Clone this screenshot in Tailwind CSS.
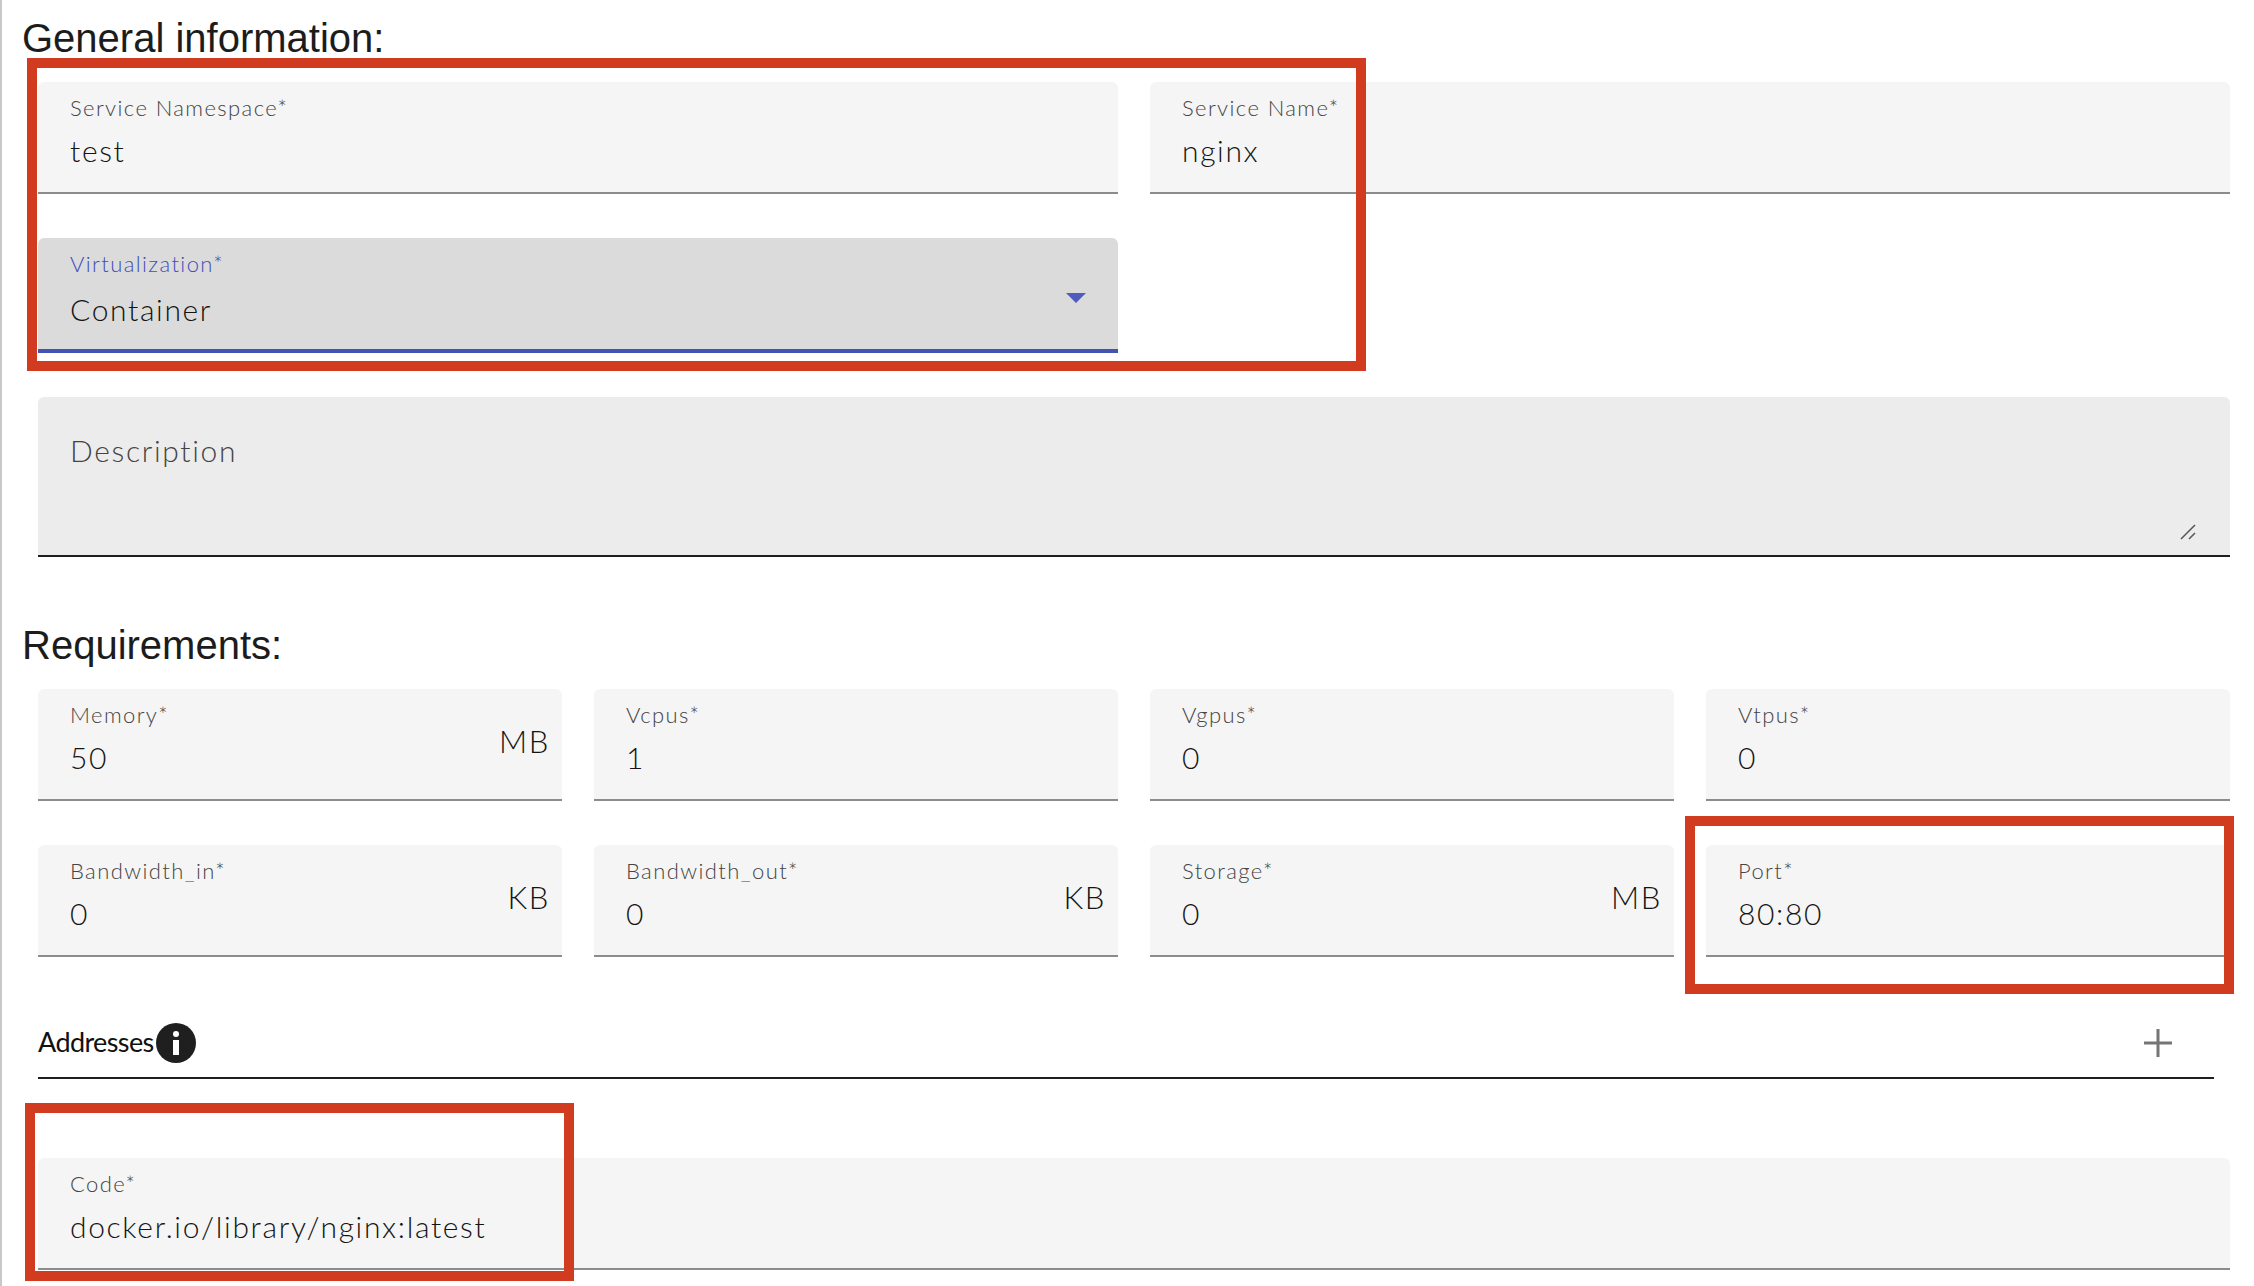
<!DOCTYPE html>
<html><head><meta charset="utf-8"><script src="https://cdn.jsdelivr.net/npm/@tailwindcss/browser@4"></script></head>
<body class="bg-white">
<div class="relative w-[2254px] h-[1286px] overflow-hidden border-l-2 border-[#c8c8c8] font-['Lato',sans-serif] text-[#141414]">
  <div class="pl-[36px] pr-[24px]">
    <h2 class="h-[82px] -ml-[16px] pt-[15px] font-['Liberation_Sans',sans-serif] text-[40px] leading-[46px] text-[#1c1c1c]">General information:</h2>
    <div class="grid grid-cols-2 gap-x-[32px] gap-y-[44px]">
      <div class="relative h-[112px] rounded-t-[6px] bg-[#f5f5f5] border-b-2 border-[#8c8c8c] pl-[32px]">
        <div class="pt-[11px] text-[22px] leading-[30px] tracking-[1.4px] font-light text-[#444]">Service Namespace*</div>
        <div class="pt-[7px] text-[30px] leading-[40px] tracking-[1.65px] font-light">test</div>
      </div>
      <div class="relative h-[112px] rounded-t-[6px] bg-[#f5f5f5] border-b-2 border-[#8c8c8c] pl-[32px]">
        <div class="pt-[11px] text-[22px] leading-[30px] tracking-[1.4px] font-light text-[#444]">Service Name*</div>
        <div class="pt-[7px] text-[30px] leading-[40px] tracking-[1.65px] font-light">nginx</div>
      </div>
      <div class="relative h-[115px] rounded-t-[6px] bg-[#dbdbdb] border-b-[4px] border-[#4353b3] pl-[32px]">
        <div class="pt-[11px] text-[22px] leading-[30px] tracking-[1.4px] font-light text-[#3f4db8]">Virtualization*</div>
        <div class="pt-[10px] text-[30px] leading-[40px] tracking-[1.65px] font-light">Container</div>
        <svg class="absolute right-[32px] top-[55px]" width="20" height="10" viewBox="0 0 20 10"><path d="M0 0h20L10 10z" fill="#4f5bbd"/></svg>
      </div>
    </div>
    <div class="relative mt-[44px] h-[160px] rounded-t-[6px] bg-[#ececec] border-b-2 border-[#1f1f1f] pl-[32px]">
      <div class="pt-[33px] text-[30px] leading-[40px] tracking-[1.65px] font-light text-[#444]">Description</div>
      <svg class="absolute right-[32px] bottom-[15px]" width="18" height="16" viewBox="0 0 18 16"><path d="M1 15 15 1M9 15l6-6" stroke="#555" stroke-width="1.5" fill="none"/></svg>
    </div>
    <h2 class="h-[132px] -ml-[16px] pt-[65px] font-['Liberation_Sans',sans-serif] text-[40px] leading-[46px] text-[#1c1c1c]">Requirements:</h2>
    <div class="grid grid-cols-4 gap-x-[32px] gap-y-[44px]">
      <div class="relative h-[112px] rounded-t-[6px] bg-[#f5f5f5] border-b-2 border-[#8c8c8c] pl-[32px]"><div class="pt-[11px] text-[22px] leading-[30px] tracking-[1.4px] font-light text-[#444]">Memory*</div><div class="pt-[7px] text-[30px] leading-[40px] tracking-[1.65px] font-light">50</div><span class="absolute right-[12px] top-[32px] text-[31px] leading-[40px] tracking-[1.65px] font-light">MB</span></div>
      <div class="relative h-[112px] rounded-t-[6px] bg-[#f5f5f5] border-b-2 border-[#8c8c8c] pl-[32px]"><div class="pt-[11px] text-[22px] leading-[30px] tracking-[1.4px] font-light text-[#444]">Vcpus*</div><div class="pt-[7px] text-[30px] leading-[40px] tracking-[1.65px] font-light">1</div></div>
      <div class="relative h-[112px] rounded-t-[6px] bg-[#f5f5f5] border-b-2 border-[#8c8c8c] pl-[32px]"><div class="pt-[11px] text-[22px] leading-[30px] tracking-[1.4px] font-light text-[#444]">Vgpus*</div><div class="pt-[7px] text-[30px] leading-[40px] tracking-[1.65px] font-light">0</div></div>
      <div class="relative h-[112px] rounded-t-[6px] bg-[#f5f5f5] border-b-2 border-[#8c8c8c] pl-[32px]"><div class="pt-[11px] text-[22px] leading-[30px] tracking-[1.4px] font-light text-[#444]">Vtpus*</div><div class="pt-[7px] text-[30px] leading-[40px] tracking-[1.65px] font-light">0</div></div>
      <div class="relative h-[112px] rounded-t-[6px] bg-[#f5f5f5] border-b-2 border-[#8c8c8c] pl-[32px]"><div class="pt-[11px] text-[22px] leading-[30px] tracking-[1.4px] font-light text-[#444]">Bandwidth_in*</div><div class="pt-[7px] text-[30px] leading-[40px] tracking-[1.65px] font-light">0</div><span class="absolute right-[12px] top-[32px] text-[31px] leading-[40px] tracking-[1.65px] font-light">KB</span></div>
      <div class="relative h-[112px] rounded-t-[6px] bg-[#f5f5f5] border-b-2 border-[#8c8c8c] pl-[32px]"><div class="pt-[11px] text-[22px] leading-[30px] tracking-[1.4px] font-light text-[#444]">Bandwidth_out*</div><div class="pt-[7px] text-[30px] leading-[40px] tracking-[1.65px] font-light">0</div><span class="absolute right-[12px] top-[32px] text-[31px] leading-[40px] tracking-[1.65px] font-light">KB</span></div>
      <div class="relative h-[112px] rounded-t-[6px] bg-[#f5f5f5] border-b-2 border-[#8c8c8c] pl-[32px]"><div class="pt-[11px] text-[22px] leading-[30px] tracking-[1.4px] font-light text-[#444]">Storage*</div><div class="pt-[7px] text-[30px] leading-[40px] tracking-[1.65px] font-light">0</div><span class="absolute right-[12px] top-[32px] text-[31px] leading-[40px] tracking-[1.65px] font-light">MB</span></div>
      <div class="relative h-[112px] rounded-t-[6px] bg-[#f5f5f5] border-b-2 border-[#8c8c8c] pl-[32px]"><div class="pt-[11px] text-[22px] leading-[30px] tracking-[1.4px] font-light text-[#444]">Port*</div><div class="pt-[7px] text-[30px] leading-[40px] tracking-[1.65px] font-light">80:80</div></div>
    </div>
    <div class="mt-[62px] mr-[16px] h-[60px] flex items-start border-b-2 border-[#1f1f1f]">
      <span class="text-[27px] leading-[46px] tracking-[-0.6px] text-[#111]">Addresses</span>
      <span class="ml-[2px] mt-[4px] w-[40px] h-[40px] rounded-full bg-[#1f1f1f] flex items-center justify-center">
        <svg width="8" height="24" viewBox="0 0 8 24"><circle cx="4" cy="3" r="3" fill="#fff"/><rect x="1" y="9" width="6" height="15" fill="#fff"/></svg>
      </span>
      <svg class="ml-auto mr-[42px] mt-[10px]" width="28" height="28" viewBox="0 0 28 28"><path d="M14 0v28M0 14h28" stroke="#757575" stroke-width="3"/></svg>
    </div>
    <div class="mt-[79px] h-[112px] rounded-t-[6px] bg-[#f5f5f5] border-b-2 border-[#8c8c8c] pl-[32px]">
      <div class="pt-[11px] text-[22px] leading-[30px] tracking-[1.4px] font-light text-[#444]">Code*</div>
      <div class="pt-[7px] text-[30px] leading-[40px] tracking-[1.65px] font-light">docker.io/library/nginx:latest</div>
    </div>
  </div>
  <div class="absolute left-[25px] top-[58px] w-[1339px] h-[313px] border-[10px] border-[#d13b20]"></div>
  <div class="absolute left-[1683px] top-[816px] w-[549px] h-[178px] border-[10px] border-[#d13b20]"></div>
  <div class="absolute left-[23px] top-[1103px] w-[549px] h-[178px] border-[10px] border-[#d13b20]"></div>
</div>
</body></html>
